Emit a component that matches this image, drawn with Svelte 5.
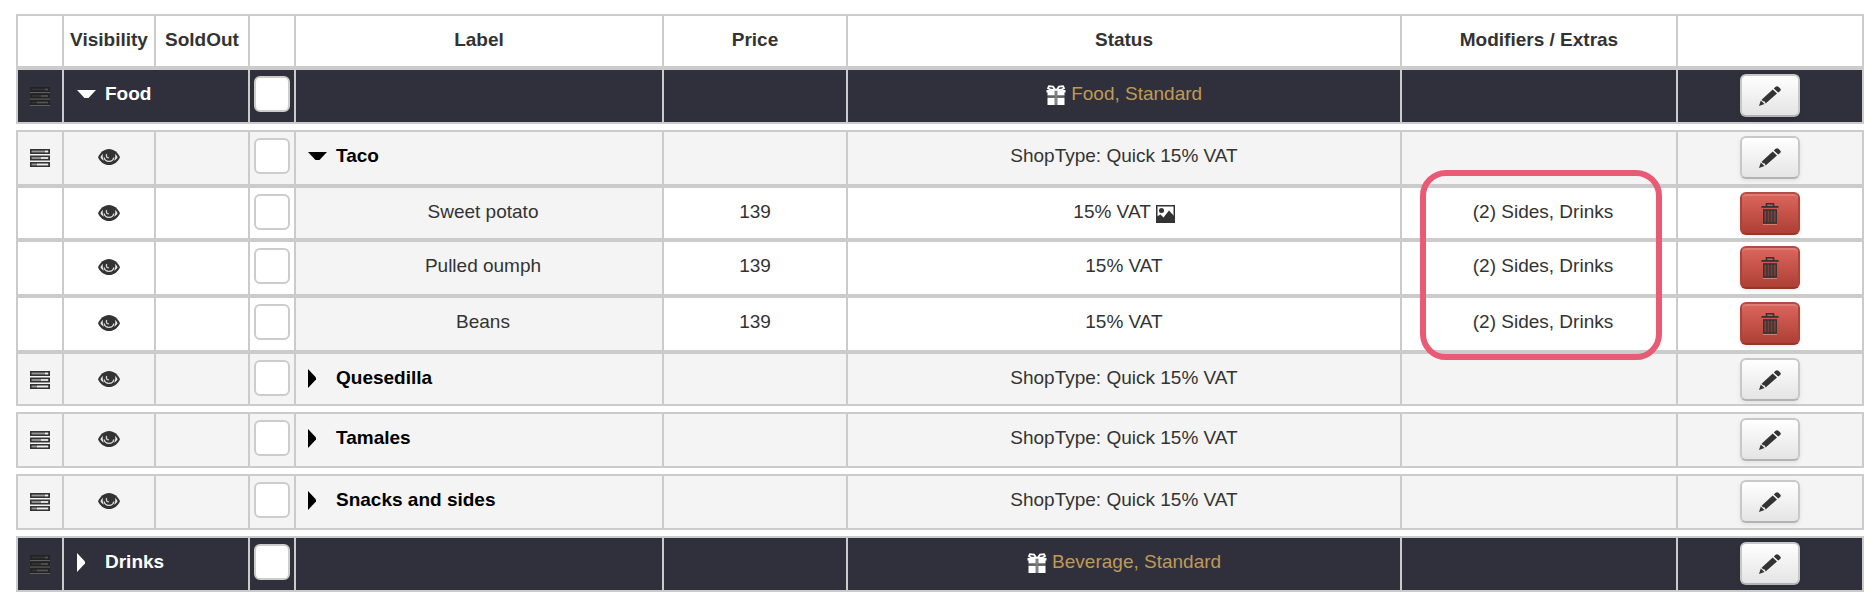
<script>
    const quick = "ShopType: Quick 15% VAT"

    let rows = $state([
        { kind: "category", label: "Food", open: true, status: "Food, Standard" },
        { kind: "group", label: "Taco", open: true, status: quick, gap: true },
        { kind: "item", label: "Sweet potato", price: 139, status: "15% VAT", picture: true, extras: "(2) Sides, Drinks", short: true, marked: true },
        { kind: "item", label: "Pulled oumph", price: 139, status: "15% VAT", extras: "(2) Sides, Drinks" },
        { kind: "item", label: "Beans", price: 139, status: "15% VAT", extras: "(2) Sides, Drinks" },
        { kind: "group", label: "Quesedilla", open: false, status: quick, short: true },
        { kind: "group", label: "Tamales", open: false, status: quick, gap: true },
        { kind: "group", label: "Snacks and sides", open: false, status: quick, gap: true },
        { kind: "category", label: "Drinks", open: false, status: "Beverage, Standard", gap: true },
    ])
</script>

{#snippet listIcon()}
    <svg class="icon list" width="20" height="20" viewBox="0 0 20 20" aria-hidden="true">
        {#each [[0, 13], [6.5, 9], [13, 5]] as [y, split]}
            <rect class="line" x="0" y={y + 4.500} width="20" height="1.500" />
            <rect class="bar" x="0.8" y={y + 0.8} width="18.4" height="3.4" />
            <rect class="rest" x={split + 2} y={y + 1.700} width={16 - split} height="1.600" />
        {/each}
    </svg>
{/snippet}

{#snippet eyeIcon()}
    <svg class="icon" width="22" height="17" viewBox="0 0 22 17" aria-hidden="true">
        <path fill="#333" d="M11 0C6 0 2.200 3.600 0 8.200 2.200 13 6 16 11 16s8.800-3 11-7.800C19.800 3.600 16 0 11 0z" />
        <path fill="#eee" d="M5 4.800C4.300 7 4.600 9.600 6 11.600 4.400 10.900 3.200 9.700 2.400 8.200 3.100 6.700 4 5.700 5 4.800zM17 4.800C18 5.700 18.900 6.700 19.600 8.200 18.800 9.700 17.600 10.900 16 11.600 17.400 9.600 17.700 7 17 4.800z" />
        <path fill="none" stroke="#ddd" stroke-width="1.400" d="M6.200 8.500C7 13.700 15 13.700 15.800 8.500" />
        <path fill="none" stroke="#ccc" stroke-width="1.400" d="M8.600 5C7.900 7.400 8.700 8.800 10.800 8.800" />
    </svg>
{/snippet}

{#snippet pencilIcon()}
    <svg width="22" height="20" viewBox="0 0 22 20" aria-hidden="true">
        <g fill="#333">
            <path d="M0 20L1.800 14.600 5.500 18.100z" />
            <path d="M2.600 13.700L13.700 3.500 18 7.600 6.600 17.400 5.800 15.500 4.100 15.300z" />
            <path d="M14.800 2.500L16.600 0.800C17.600 0 18.400 0 19.400 0.800L21.200 2.500C22 3.400 22 4.200 21.200 5L19.200 6.600z" />
        </g>
    </svg>
{/snippet}

{#snippet trashIcon()}
    <svg width="18" height="22" viewBox="0 0 18 22" aria-hidden="true">
        <path fill="none" stroke="#333" stroke-width="1.600" d="M5.500 3.500V0.800H12.500V3.500" />
        <path fill="#333" d="M0.500 3H17.500V4.800H0.500z" />
        <path fill="#333" fill-opacity="0.500" d="M2 6.500H16V20.500H2z" />
        <path fill="none" stroke="#333" stroke-width="1.300" d="M2.700 6.500V20H15.300V6.500M6 6.500V20M9 6.500V20M12 6.500V20M2 7H16" />
        <path fill="#fff" fill-opacity="0.300" d="M2 21H16V22H2z" />
    </svg>
{/snippet}

{#snippet giftIcon()}
    <svg class="inline" width="20" height="20" viewBox="0 0 20 20" aria-hidden="true">
        <path fill="none" stroke="#fff" stroke-width="1.800" d="M9.500 5L7 1.700 3 1.200 2 3.200 4.500 4.700zM10.500 5L13 1.700 17 1.200 18 3.200 15.500 4.700z" />
        <path fill="#fff" d="M0.500 5H8.700V10.500H1.500V7.500H0.500zM11.300 5H19.500V7.500H18.500V10.500H11.300zM1.500 12.800H8.700V20H1.500zM11.300 12.800H18.500V20H11.300z" />
        <path fill="#bbb" d="M8.700 5H11.300V20H8.700z" fill-opacity="0.600" />
        <path fill="#777" d="M1.500 10.500H18.500V12.800H1.500z" fill-opacity="0.700" />
    </svg>
{/snippet}

{#snippet pictureIcon()}
    <svg class="inline" width="19" height="18" viewBox="0 0 19 18" aria-hidden="true">
        <path fill="none" stroke="#333" stroke-width="1.500" d="M0.750 0.750H18.250V17.250H0.750z" />
        <path fill="#333" d="M1 11.500L4.500 9.500 7.500 12.500 13 5.500 18 11V17.500H1z" />
        <circle cx="5.500" cy="5.500" r="2.500" fill="#333" />
    </svg>
{/snippet}

{#snippet toggle(row)}
    <button class="toggle" aria-expanded={row.open} onclick={() => (row.open = !row.open)}>
        <span class="caret">
            {#if row.open}
                <svg width="19" height="8" viewBox="0 0 19 8" aria-hidden="true"><path fill="currentColor" d="M0 0H19L11.500 8H7.500z" /></svg>
            {:else}
                <svg width="8" height="19" viewBox="0 0 8 19" aria-hidden="true"><path fill="currentColor" d="M0 0L8 8.500V10.500L0 19z" /></svg>
            {/if}
        </span>
        {row.label}
    </button>
{/snippet}

<main>
    <table>
        <thead>
            <tr class="short">
                <th></th>
                <th>Visibility</th>
                <th>SoldOut</th>
                <th></th>
                <th>Label</th>
                <th>Price</th>
                <th>Status</th>
                <th>Modifiers / Extras</th>
                <th></th>
            </tr>
        </thead>
        <tbody>
            {#each rows as row}
                <tr class={row.kind} class:short={row.short} class:gap={row.gap}>
                    <td>
                        {#if row.kind !== "item"}{@render listIcon()}{/if}
                    </td>
                    {#if row.kind === "category"}
                        <td class="title wide" colspan="2">{@render toggle(row)}</td>
                    {:else}
                        <td>{@render eyeIcon()}</td>
                        <td></td>
                    {/if}
                    <td class="check"><input type="checkbox" aria-label="Select {row.label}" /></td>
                    {#if row.kind === "group"}
                        <td class="title">{@render toggle(row)}</td>
                    {:else if row.kind === "item"}
                        <td class="name">{row.label}</td>
                    {:else}
                        <td></td>
                    {/if}
                    <td>{row.price ?? ""}</td>
                    <td class="status">
                        <span>
                            {#if row.kind === "category"}{@render giftIcon()}{/if}
                            {row.status}
                            {#if row.picture}{@render pictureIcon()}{/if}
                        </span>
                    </td>
                    <td class="extras">
                        {row.extras ?? ""}
                        {#if row.marked}<span class="marker"></span>{/if}
                    </td>
                    <td class="action">
                        {#if row.kind === "item"}
                            <button class="btn danger" aria-label="Delete {row.label}">{@render trashIcon()}</button>
                        {:else}
                            <button class="btn" aria-label="Edit {row.label}">{@render pencilIcon()}</button>
                        {/if}
                    </td>
                </tr>
            {/each}
        </tbody>
    </table>
</main>

<style>
    :global(body){
        margin: 0;
        background: white;
    }

    main{
        padding: 14px 10px 8px 16px;
        font-family: "Liberation Sans", Arial, sans-serif;
        font-size: 19px;
        line-height: 24px;
        color: #333;
    }

    table, thead, tbody{
        display: block;
    }

    tr{
        display: grid;
        grid-template-columns: 46fr 92fr 94fr 46fr 368fr 184fr 554fr 276fr 188fr;
        min-height: 56px;
    }

    tr.short{
        min-height: 54px;
    }

    tr.gap{
        margin-top: 6px;
    }

    th, td{
        display: flex;
        justify-content: center;
        align-items: flex-start;
        min-width: 0;
        box-sizing: border-box;
        padding: 12px 0 0;
        border: 2px solid #cbcbcb;
        border-right: 0;
        white-space: nowrap;
    }

    th:last-child, td:last-child{
        border-right: 2px solid #cbcbcb;
    }

    .group td, .item .name{
        background: #f4f4f4;
    }

    .category td{
        background: #2f303b;
    }

    .wide{
        grid-column: span 2;
    }

    .title{
        justify-content: flex-start;
        padding-left: 12px;
    }

    .category .title{
        padding-left: 13px;
    }

    .name, .item .extras{
        padding-left: 8px;
    }

    .category .status{
        color: #c09a56;
    }

    .icon{
        margin-top: 5px;
    }

    .inline{
        vertical-align: -5px;
    }

    .bar{
        fill: #999;
        stroke: #333;
        stroke-width: 1.6px;
    }

    .rest{
        fill: #eee;
    }

    .line{
        fill: none;
    }

    .category .bar{
        fill: #333;
        stroke: #222;
    }

    .category .rest{
        fill: #555;
    }

    .category .line{
        fill: #606060;
    }

    .toggle{
        display: flex;
        padding: 0;
        border: 0;
        background: none;
        color: black;
        font: inherit;
        font-weight: bold;
        cursor: pointer;
    }

    .category .toggle{
        color: white;
    }

    .caret{
        display: flex;
        align-items: center;
        width: 28px;
        height: 24px;
    }

    .check{
        padding-top: 6px;
    }

    input{
        appearance: none;
        width: 36px;
        height: 36px;
        margin: 0;
        border: 2px solid #ccc;
        border-radius: 6px;
        background: white;
    }

    input:checked{
        background: #888;
    }

    .action{
        padding-top: 4px;
    }

    .btn{
        display: flex;
        justify-content: center;
        align-items: center;
        box-sizing: border-box;
        width: 60px;
        height: 43px;
        padding: 0;
        border: 2px solid #c8c8c8;
        border-bottom-color: #b3b3b3;
        border-radius: 6px;
        background: linear-gradient(#ffffff, #e4e4e4);
        box-shadow: 0 2px 4px rgba(0, 0, 0, 0.08);
        cursor: pointer;
    }

    .danger{
        border-color: #b34c43 #a8443b #983529;
        background: linear-gradient(#dc665e, #ae3f34);
        box-shadow: inset 0 2px 0 rgba(255, 255, 255, 0.15), 0 2px 4px rgba(0, 0, 0, 0.08);
    }

    .extras{
        position: relative;
    }

    /* frame around the extras of the open group, reaching over three rows */
    .marker{
        position: absolute;
        z-index: 1;
        top: -18px;
        left: 18px;
        right: 14px;
        height: 190px;
        box-sizing: border-box;
        border: 6px solid #e95a75;
        border-radius: 26px;
        pointer-events: none;
    }
</style>
